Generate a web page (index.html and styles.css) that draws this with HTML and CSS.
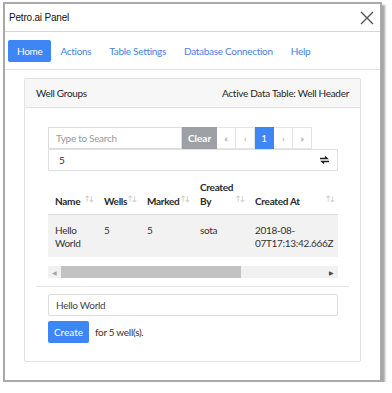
FILE: index.html
```html
<!DOCTYPE html>
<html lang="en">

<head>
    <meta charset="UTF-8">
    <title>Petro.ai Panel</title>
    <link rel="stylesheet" href="styles.css">
</head>

<body>
    <div class="window">
        <div class="titlebar">
            <span class="title">Petro.ai Panel</span>
            <span class="close">
                <svg width="14" height="14" viewBox="0 0 14 14"><path d="M1 1 L13 13 M13 1 L1 13" stroke="#555" stroke-width="1.4"/></svg>
            </span>
        </div>
        <div class="nav">
            <a class="tab active">Home</a>
            <a class="tab">Actions</a>
            <a class="tab">Table Settings</a>
            <a class="tab">Database Connection</a>
            <a class="tab">Help</a>
        </div>
        <div class="content">
            <div class="card">
                <div class="card-header">
                    <span>Well Groups</span>
                    <span>Active Data Table: Well Header</span>
                </div>
                <div class="card-body">
                    <div class="toolbar">
                        <input class="search" type="text" placeholder="Type to Search">
                        <button class="clear">Clear</button>
                        <div class="pager">
                            <span>&laquo;</span>
                            <span>&lsaquo;</span>
                            <span class="current">1</span>
                            <span>&rsaquo;</span>
                            <span>&raquo;</span>
                        </div>
                    </div>
                    <div class="select">
                        <span>5</span>
                        <svg width="9" height="8" viewBox="0 0 9 8"><path d="M0 2.5 H7 L5 0.5 M9 5.5 H2 L4 7.5" stroke="#222" stroke-width="1.5" fill="none"/></svg>
                    </div>
                    <div class="table-wrap">
                        <table>
                            <thead>
                                <tr>
                                    <th class="c-name">Name<i>&uarr;&darr;</i></th>
                                    <th class="c-wells">Wells<i>&uarr;&darr;</i></th>
                                    <th class="c-marked">Marked<i>&uarr;&darr;</i></th>
                                    <th class="c-by">Created By<i>&uarr;&darr;</i></th>
                                    <th class="c-at">Created At<i>&uarr;&darr;</i></th>
                                </tr>
                            </thead>
                            <tbody>
                                <tr>
                                    <td>Hello World</td>
                                    <td>5</td>
                                    <td>5</td>
                                    <td>sota</td>
                                    <td>2018-08-07T17:13:42.666Z</td>
                                </tr>
                            </tbody>
                        </table>
                    </div>
                    <div class="scrollbar">
                        <span class="arrow">&#9664;</span>
                        <div class="track"><div class="thumb"></div></div>
                        <span class="arrow">&#9654;</span>
                    </div>
                    <hr>
                    <input class="name-input" type="text" value="Hello World">
                    <div class="create-row">
                        <button class="create">Create</button>
                        <span>for 5 well(s).</span>
                    </div>
                </div>
            </div>
        </div>
    </div>
</body>

</html>
```

FILE: styles.css
```css
body {
    margin: 0;
    background-color: #fff;
    font-family: Lato, "Noto Sans", sans-serif;
    font-size: 10px;
    letter-spacing: -0.3px;
    color: #333;
}

.window {
    margin: 2px 0 0 3px;
    width: 375px;
    border: 2px solid #a9a9a9;
    box-shadow: 3px 3px 2px rgba(0, 0, 0, 0.35);
    background-color: #fff;
}

.titlebar {
    display: flex;
    justify-content: space-between;
    align-items: center;
    height: 27px;
    padding: 0 6px 0 4px;
    border-bottom: 1px solid #d6d6d6;
    font-family: "Liberation Sans", Arial, sans-serif;
    font-size: 10px;
    letter-spacing: -0.2px;
    color: #111;
}

.close {
    display: flex;
}

.nav {
    display: flex;
    align-items: center;
    height: 37px;
    padding: 0 3px;
    border-bottom: 1px solid #e3e3e3;
}

.tab {
    padding: 5px 9px;
    color: #4a7fe0;
    border-radius: 2px;
}

.tab.active {
    background-color: #3e86f5;
    color: #fff;
}

.content {
    padding: 8px 19px 18px;
}

.card {
    border: 1px solid #e2e2e2;
    border-radius: 2px;
}

.card-header {
    display: flex;
    justify-content: space-between;
    align-items: center;
    height: 28px;
    padding: 0 11px;
    background-color: #f7f7f7;
    border-bottom: 1px solid #e2e2e2;
    color: #1e1e1e;
}

.card-body {
    padding: 19px 11px 18px;
}

.toolbar {
    display: flex;
    margin-left: 12px;
    height: 22px;
}

.search {
    box-sizing: border-box;
    width: 134px;
    height: 22px;
    border: 1px solid #dcdcdc;
    padding: 0 7px;
    font-family: inherit;
    font-size: 10px;
    letter-spacing: -0.3px;
}

.search::placeholder {
    color: #9a9a9a;
}

.clear {
    width: 35px;
    border: none;
    background-color: #9da0a4;
    color: #fff;
    font-family: inherit;
    font-size: 10px;
    font-weight: bold;
    padding: 0;
}

.pager {
    display: flex;
}

.pager span {
    display: flex;
    align-items: center;
    justify-content: center;
    width: 18px;
    border: 1px solid #e3e3e3;
    border-left: none;
    color: #999;
    font-size: 9px;
}

.pager span.current {
    background-color: #3e86f5;
    border-color: #3e86f5;
    color: #fff;
    font-size: 10px;
}

.select {
    display: flex;
    justify-content: space-between;
    align-items: center;
    box-sizing: border-box;
    margin-left: 12px;
    width: 290px;
    height: 22px;
    padding: 0 8px 0 10px;
    border: 1px solid #e0e0e0;
    color: #333;
}

.table-wrap {
    margin-left: 12px;
    width: 290px;
}

table {
    border-collapse: collapse;
    width: 290px;
    table-layout: fixed;
}

th {
    box-sizing: border-box;
    height: 43px;
    padding: 0 12px 6px 7px;
    text-align: left;
    vertical-align: bottom;
    line-height: 14px;
    font-weight: bold;
    color: #2a2a2a;
    border-bottom: 1px solid #dcdcdc;
    position: relative;
}

th i {
    position: absolute;
    right: 4px;
    bottom: 9px;
    font-style: normal;
    font-weight: normal;
    color: #bbb;
    font-size: 7px;
    letter-spacing: -1px;
}

.c-name { width: 49px; }
.c-wells { width: 43px; }
.c-marked { width: 53px; }
.c-by { width: 55px; }

td {
    box-sizing: border-box;
    padding: 9px 4px 7px 7px;
    vertical-align: top;
    line-height: 13px;
    background-color: #f2f2f2;
    height: 43px;
}

.scrollbar {
    display: flex;
    align-items: center;
    margin: 9px 0 0 12px;
    width: 290px;
    height: 12px;
    background-color: #f1f1f1;
}

.arrow {
    width: 13px;
    text-align: center;
    font-size: 6px;
    color: #a3a3a3;
}

.arrow:last-child {
    color: #444;
}

.track {
    flex: 1;
    height: 100%;
}

.thumb {
    width: 180px;
    height: 100%;
    background-color: #c1c1c1;
}

hr {
    border: none;
    border-top: 1px solid #e3e3e3;
    margin: 8px 0 7px;
}

.name-input {
    display: block;
    box-sizing: border-box;
    margin-left: 12px;
    width: 290px;
    height: 22px;
    border: 1px solid #dcdcdc;
    border-radius: 2px;
    padding: 0 7px;
    font-family: inherit;
    font-size: 10px;
    letter-spacing: -0.3px;
    color: #444;
}

.create-row {
    display: flex;
    align-items: center;
    gap: 6px;
    margin: 5px 0 0 12px;
}

.create {
    width: 41px;
    height: 22px;
    border: none;
    border-radius: 2px;
    background-color: #3e86f5;
    color: #fff;
    font-family: inherit;
    font-size: 10px;
    padding: 0;
}
```
